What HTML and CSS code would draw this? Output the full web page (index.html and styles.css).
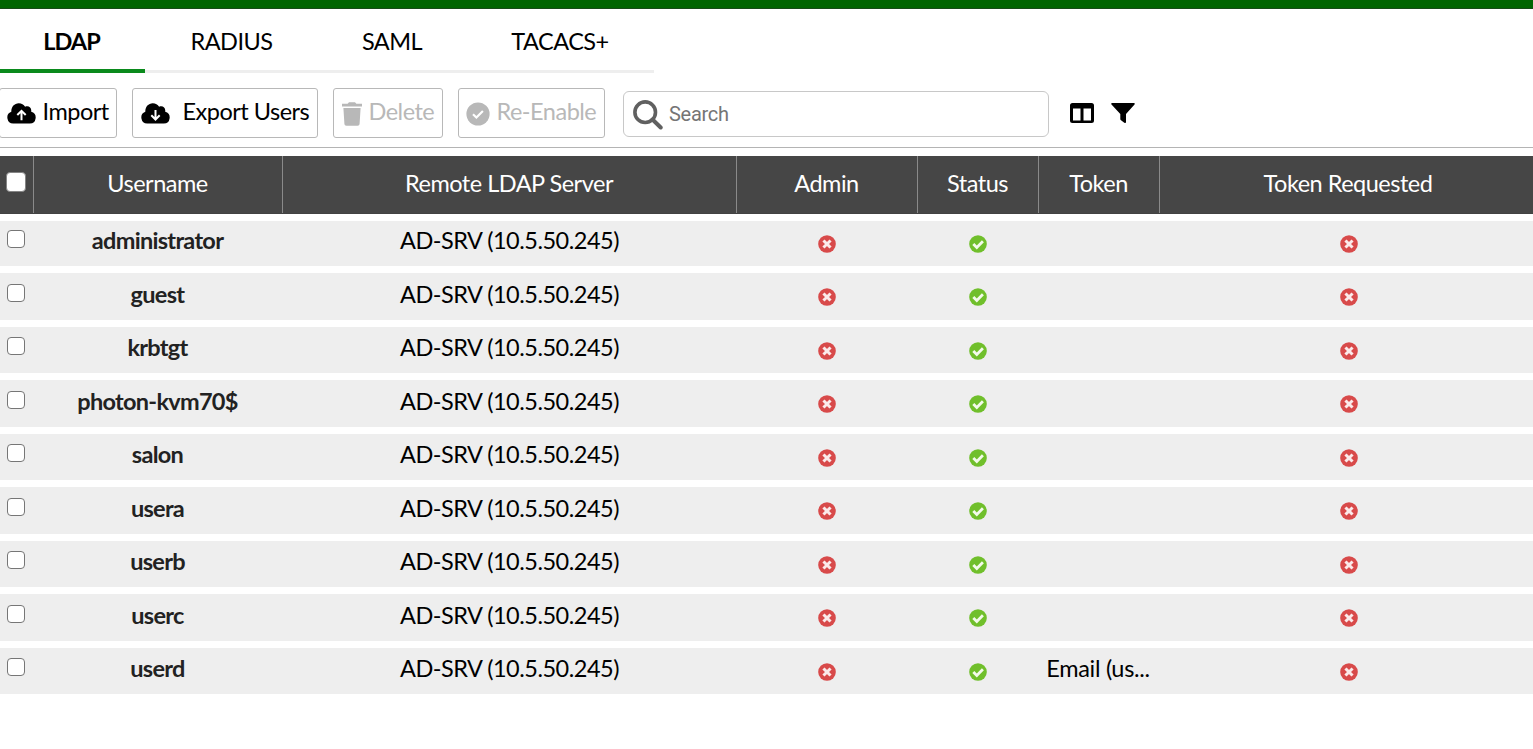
FILE: index.html
```html
<!DOCTYPE html>
<html lang="en">
<head>
<meta charset="utf-8">
<title>Remote Users</title>
<link rel="stylesheet" href="styles.css">
</head>
<body>
<svg class="sprite" width="0" height="0">
  <symbol id="no" viewBox="0 0 18 18"><circle cx="9" cy="9" r="8.8" fill="#d84a4a"/><path d="M6.5 6.500l5 5M11.500 6.500l-5 5" stroke="#fbeaea" stroke-width="3" stroke-linecap="square" fill="none"/></symbol>
  <symbol id="yes" viewBox="0 0 18 18"><circle cx="9" cy="9" r="8.8" fill="#70bf2b"/><path d="M4.300 8.900l3.500 3.500 6.100-6.100" stroke="#f3faea" stroke-width="2.800" fill="none"/></symbol>
</svg>
<div class="topbar"></div>
<nav class="tabs">
  <a class="tab active">LDAP</a><a class="tab radius">RADIUS</a><a class="tab saml">SAML</a><a class="tab tacacs">TACACS+</a>
</nav>
<div class="toolbar">
  <button class="btn import"><svg width="29" height="21" viewBox="0 0 29 21"><path d="M6.200 20.500A6.100 6.100 0 0 1 4.300 8.700C4.200 4 7.300.3 11.800.3c2.700 0 5 1.300 6.300 3.500 3.500-1.500 6.800 1 6.100 4.900a6 6 0 0 1-1.400 11.800z"/><path d="M14.500 17.300V8.200M10.300 12l4.200-4.200 4.200 4.200" stroke="#fff" stroke-width="2" fill="none"/></svg><span>Import</span></button>
  <button class="btn export"><svg width="29" height="21" viewBox="0 0 29 21"><path d="M6.200 20.500A6.100 6.100 0 0 1 4.300 8.700C4.200 4 7.300.3 11.800.3c2.700 0 5 1.300 6.300 3.500 3.500-1.500 6.800 1 6.100 4.900a6 6 0 0 1-1.400 11.800z"/><path d="M14.500 7v9.200M10.300 12.300l4.200 4.200 4.200-4.200" stroke="#fff" stroke-width="2" fill="none"/></svg><span>Export Users</span></button>
  <button class="btn delete off"><svg width="20" height="24" viewBox="0 0 20 24"><path d="M0 1.800h5.600L7 .3h6l1.400 1.500H20v2.700H0zM1.400 6h17.200l-1 15.700c-.1 1.300-.8 2-2 2H4.400c-1.200 0-1.900-.7-2-2z"/></svg><span>Delete</span></button>
  <button class="btn enable off"><svg width="24" height="24" viewBox="0 0 24 24"><circle cx="12" cy="12" r="11.600"/><path d="M7 12.200l3.400 3.300 6.500-6.500" stroke="#fff" stroke-width="2.200" fill="none"/></svg><span>Re-Enable</span></button>
  <label class="search"><svg width="30" height="30" viewBox="0 0 30 30"><circle cx="12.200" cy="12.200" r="10.300" stroke="#606060" stroke-width="3.600" fill="none"/><path d="M19.500 19.500l8.200 8" stroke="#606060" stroke-width="4" stroke-linecap="round"/></svg><input type="text" placeholder="Search"></label>
  <svg class="columns" width="24" height="20" viewBox="0 0 24 20"><path fill-rule="evenodd" d="M2.500 0h19A2.500 2.500 0 0 1 24 2.500v15a2.500 2.500 0 0 1-2.500 2.500h-19A2.500 2.500 0 0 1 0 17.500v-15A2.500 2.500 0 0 1 2.500 0zM3 5.500v12h7.500v-12zM13.500 5.500v12H21v-12z"/></svg>
  <svg class="filter" width="24" height="20" viewBox="0 0 24 20"><path d="M1 0h22c.8 0 1 1 .5 1.600L15 11v8c0 1-1 1.300-1.700.8L10 17.300c-.5-.4-.7-.8-.7-1.400V11L.5 1.600C0 1 .2 0 1 0z"/></svg>
</div>
<main class="grid">
  <div class="row head"><div><i class="box"></i></div><div>Username</div><div>Remote LDAP Server</div><div>Admin</div><div>Status</div><div>Token</div><div>Token Requested</div></div>
  <div class="row first"><div><i class="box"></i></div><div class="name">administrator</div><div>AD-SRV (10.5.50.245)</div><div><svg class="mark"><use href="#no"/></svg></div><div><svg class="mark"><use href="#yes"/></svg></div><div></div><div><svg class="mark"><use href="#no"/></svg></div></div>
  <div class="row"><div><i class="box"></i></div><div class="name">guest</div><div>AD-SRV (10.5.50.245)</div><div><svg class="mark"><use href="#no"/></svg></div><div><svg class="mark"><use href="#yes"/></svg></div><div></div><div><svg class="mark"><use href="#no"/></svg></div></div>
  <div class="row"><div><i class="box"></i></div><div class="name">krbtgt</div><div>AD-SRV (10.5.50.245)</div><div><svg class="mark"><use href="#no"/></svg></div><div><svg class="mark"><use href="#yes"/></svg></div><div></div><div><svg class="mark"><use href="#no"/></svg></div></div>
  <div class="row"><div><i class="box"></i></div><div class="name">photon-kvm70$</div><div>AD-SRV (10.5.50.245)</div><div><svg class="mark"><use href="#no"/></svg></div><div><svg class="mark"><use href="#yes"/></svg></div><div></div><div><svg class="mark"><use href="#no"/></svg></div></div>
  <div class="row"><div><i class="box"></i></div><div class="name">salon</div><div>AD-SRV (10.5.50.245)</div><div><svg class="mark"><use href="#no"/></svg></div><div><svg class="mark"><use href="#yes"/></svg></div><div></div><div><svg class="mark"><use href="#no"/></svg></div></div>
  <div class="row"><div><i class="box"></i></div><div class="name">usera</div><div>AD-SRV (10.5.50.245)</div><div><svg class="mark"><use href="#no"/></svg></div><div><svg class="mark"><use href="#yes"/></svg></div><div></div><div><svg class="mark"><use href="#no"/></svg></div></div>
  <div class="row"><div><i class="box"></i></div><div class="name">userb</div><div>AD-SRV (10.5.50.245)</div><div><svg class="mark"><use href="#no"/></svg></div><div><svg class="mark"><use href="#yes"/></svg></div><div></div><div><svg class="mark"><use href="#no"/></svg></div></div>
  <div class="row"><div><i class="box"></i></div><div class="name">userc</div><div>AD-SRV (10.5.50.245)</div><div><svg class="mark"><use href="#no"/></svg></div><div><svg class="mark"><use href="#yes"/></svg></div><div></div><div><svg class="mark"><use href="#no"/></svg></div></div>
  <div class="row"><div><i class="box"></i></div><div class="name">userd</div><div>AD-SRV (10.5.50.245)</div><div><svg class="mark"><use href="#no"/></svg></div><div><svg class="mark"><use href="#yes"/></svg></div><div class="token">Email (us...</div><div><svg class="mark"><use href="#no"/></svg></div></div>
</main>
</body>
</html>
```
FILE: styles.css
```css
* { box-sizing: border-box; }
body { margin: 0; width: 1533px; height: 749px; overflow: hidden; background: #fff; color: #000; font: 23.5px/30px Lato, sans-serif; letter-spacing: -0.5px; }
.sprite { display: none; }
.topbar { height: 9px; background: #006400; border-bottom: 1px solid #174a17; }
.tabs { display: flex; width: 654px; height: 64px; }
.tab { display: flex; justify-content: center; height: 64px; padding-top: 17px; border-bottom: 3px solid #eee; }
.tab.active { width: 145px; padding-right: 2px; font-weight: 700; letter-spacing: -1px; border-bottom: 4px solid #0a8a1c; }
.radius { width: 173px; }
.saml { width: 148px; }
.tacacs { width: 188px; }
.toolbar { display: flex; height: 75px; padding-top: 15px; border-bottom: 1px solid #b4b4b4; }
.btn { display: flex; align-items: center; height: 50px; margin: 0 15px 0 0; padding: 0; border: 1px solid #b8b8b8; border-radius: 3px; background: #fff; color: #000; font: inherit; letter-spacing: -0.5px; white-space: nowrap; }
.btn svg { flex: none; margin-top: 1px; }
.btn span { margin-top: -4px; }
.import { width: 118px; margin-left: -1px; padding-left: 7px; gap: 6.5px; }
.export { width: 186px; padding-left: 8px; gap: 12.5px; }
.delete { width: 110px; padding-left: 8px; gap: 6.5px; }
.enable { width: 147px; padding-left: 7px; gap: 6.5px; margin-right: 18px; }
.off { color: #b8b8b8; fill: #b8b8b8; }
.search { display: flex; align-items: center; width: 426px; height: 46px; margin-top: 3px; padding-left: 9px; border: 1px solid #c8c8c8; border-radius: 6px; }
.search svg { margin-top: 2px; }
.search input { width: 350px; margin-left: 6px; padding: 0; border: 0; outline: 0; font: 20px/30px Roboto, sans-serif; letter-spacing: -0.3px; }
.search input::placeholder { color: #757575; opacity: 1; }
.columns { margin: 15px 0 0 21px; }
.filter { margin: 15px 0 0 17px; }
.grid { margin-top: 8px; }
.row { display: grid; grid-template-columns: 34px 249px 454px 181px 121px 121px 378px; height: 46.5px; margin-bottom: 7px; background: #eee; text-align: center; }
.row > div { padding: 5.3px 1px 0 0; white-space: nowrap; }
.row > div:first-child { padding: 10.3px 0 0 7px; }
.row.first { height: 45.4px; }
.row.first > div { padding-top: 4px; }
.row.first > div:first-child { padding-top: 9px; }
.row.head { height: 58px; background: #464646; color: #fff; border-bottom: 1px solid #424242; }
.row.head > div { padding-top: 12px; border-right: 1px solid #8a8a8a; }
.row.head > div:first-child { padding: 16px 0 0 6px; }
.box { display: block; width: 18px; height: 18px; border: 1.500px solid #767676; border-radius: 4px; background: #fff; }
.head .box { width: 20px; height: 20px; border: 1px solid #858585; }
.row > .name { padding-right: 2px; color: #222; font-weight: 700; letter-spacing: -0.7px; }
.row > .token { padding-right: 3px; letter-spacing: -0.3px; }
.mark { display: block; width: 18px; height: 18px; margin: 9.500px auto 0; }
```
